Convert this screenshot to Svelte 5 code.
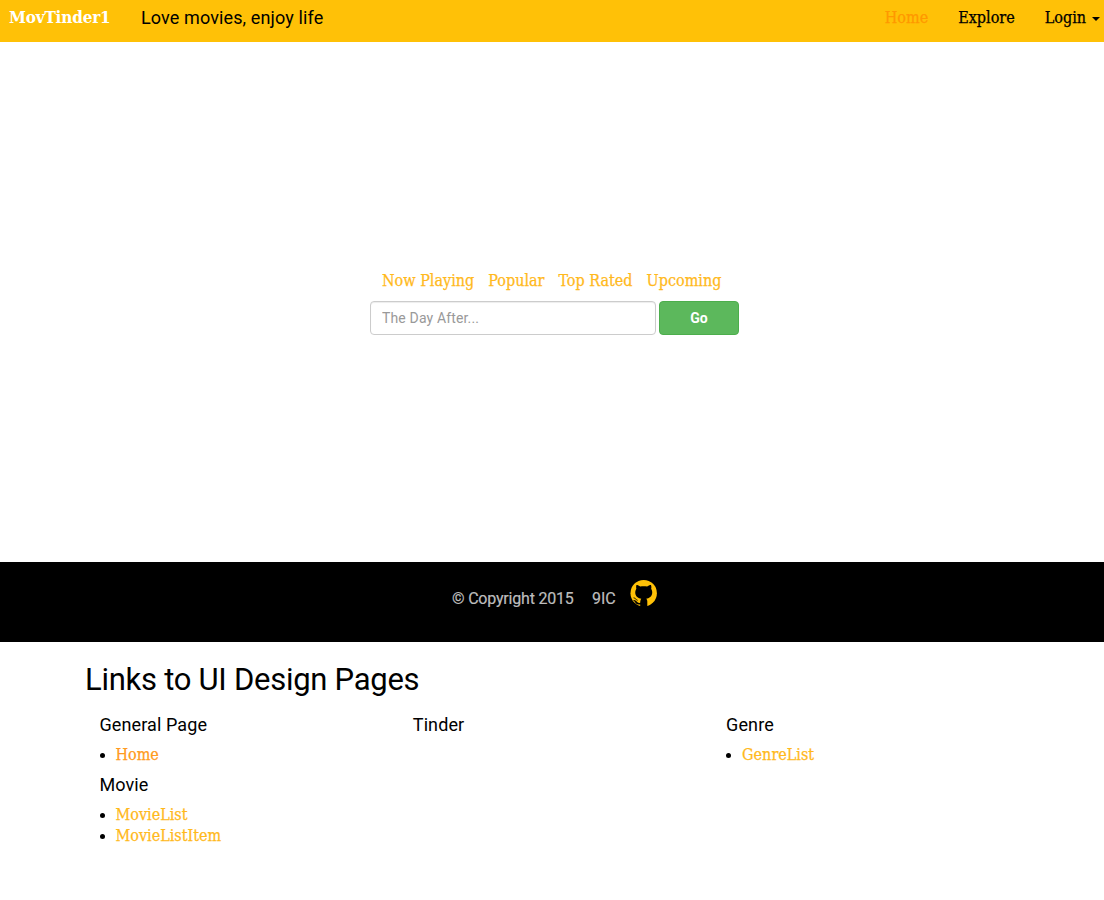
<script>
  const filters = ['Now Playing', 'Popular', 'Top Rated', 'Upcoming'];
  const columns = [
    [
      { title: 'General Page', links: [{ label: 'Home', active: true }] },
      { title: 'Movie', links: [{ label: 'MovieList' }, { label: 'MovieListItem' }] }
    ],
    [{ title: 'Tinder', links: [] }],
    [{ title: 'Genre', links: [{ label: 'GenreList' }] }]
  ];
</script>

<header>
  <a class="brand" href="#top">MovTinder1</a>
  <span class="tagline">Love movies, enjoy life</span>
  <nav>
    <a class="active" href="#home">Home</a>
    <a href="#explore">Explore</a>
    <a href="#login">Login<span class="caret"></span></a>
  </nav>
</header>

<main>
  <div class="filters">
    {#each filters as f}<a href="#filter">{f}</a>{/each}
  </div>
  <form>
    <input type="text" placeholder="The Day After..." />
    <button type="button">Go</button>
  </form>
</main>

<footer>
  <span class="copy">© Copyright 2015</span>
  <span class="org">9IC</span>
  <svg viewBox="0 0 27 27" width="27" height="27" aria-hidden="true">
    <circle cx="13.7" cy="13.2" r="13.2" fill="#ffc107" />
    <path d="M6.400 5.100c1.400 0 2.700.7 3.900 1.400 2.200-.4 4.600-.4 6.800 0 1.200-.7 2.500-1.400 3.900-1.400.5 1.300.5 2.500.2 3.600 2.200 3.400 1.200 9.300-5 10 .8.8 1.100 1.700 1.100 2.900V27h-7.100v-2.500c-3.300.5-4.400-.9-5.200-2.400-.5-.9-1.200-1.300-1.900-1.900 2.200-.5 3.200 1 4 1.900.8.900 2 .9 3.100.6.1-1.700.3-3.200 1.100-4-6.200-.7-7.200-6.600-5-10-.3-1.100-.3-2.300.1-3.600z" />
    <path d="M3.600 17.800c1.900.3 2.400 2 4 2.500" fill="none" stroke="#000" stroke-width=".9" />
  </svg>
</footer>

<section>
  <h2>Links to UI Design Pages</h2>
  <div class="columns">
    {#each columns as groups}
      <div>
        {#each groups as group}
          <h4>{group.title}</h4>
          <ul>
            {#each group.links as link}
              <li><a class:active={link.active} href="#page">{link.label}</a></li>
            {/each}
          </ul>
        {/each}
      </div>
    {/each}
  </div>
</section>

<style>
  :global(body) {
    background: #fff;
    color: #000;
    font: 15px/21px Roboto, sans-serif;
  }
  a {
    font-family: 'Roboto Slab', 'DejaVu Serif Condensed', 'DejaVu Serif', serif;
    font-stretch: condensed;
    font-size: 16px;
    color: #ffb91c;
    text-decoration: none;
    white-space: nowrap;
    -webkit-text-stroke: 0.25px currentColor;
  }
  header {
    display: flex;
    box-sizing: border-box;
    height: 42px;
    padding: 7px 4px 0 9px;
    background: #ffc107;
  }
  .brand {
    width: 132px;
    color: #fff;
    font-size: 17px;
    font-weight: 700;
    letter-spacing: -0.2px;
    -webkit-text-stroke: 0;
  }
  .tagline {
    font-size: 18px;
    letter-spacing: 0.12px;
  }
  nav {
    display: flex;
    gap: 30px;
    margin-left: auto;
  }
  nav a {
    color: #000;
  }
  nav .active {
    color: #ff9800;
  }
  .caret {
    display: inline-block;
    margin-left: 6px;
    vertical-align: middle;
    border: 4px solid transparent;
    border-top-color: #000;
    border-bottom: 0;
  }
  main {
    box-sizing: border-box;
    height: 520px;
    padding: 228px 0 0 370px;
  }
  .filters {
    display: flex;
    gap: 14px;
    padding-left: 12px;
  }
  form {
    display: flex;
    gap: 3px;
    margin-top: 10px;
  }
  input,
  button {
    box-sizing: border-box;
    height: 34px;
    margin: 0;
    border-radius: 4px;
    font: 14px Roboto, sans-serif;
  }
  input {
    width: 286px;
    padding: 0 11px;
    border: 1px solid #ccc;
    box-shadow: inset 0 1px 1px rgba(0, 0, 0, 0.075);
    letter-spacing: 0.15px;
  }
  input::placeholder {
    color: #999;
  }
  button {
    width: 80px;
    border: 1px solid #4cae4c;
    background: #5cb85c;
    color: #fff;
    font-weight: 700;
  }
  footer {
    display: flex;
    box-sizing: border-box;
    height: 80px;
    padding: 18px 0 0 452px;
    background: #000;
    color: #bdbdbd;
    font-size: 16px;
  }
  footer span {
    padding-top: 8px;
    white-space: nowrap;
    -webkit-text-stroke: 0.2px currentColor;
  }
  .copy {
    width: 140px;
    letter-spacing: -0.2px;
  }
  .org {
    width: 38px;
  }
  section {
    padding: 21px 0 0 85px;
  }
  h2 {
    margin: 0;
    font-size: 31px;
    font-weight: 400;
    line-height: 34px;
    letter-spacing: -0.27px;
  }
  .columns {
    display: grid;
    grid-template-columns: repeat(3, 313.3px);
    padding: 18px 0 0 14.5px;
  }
  h4 {
    margin: 0 0 9px;
    font-size: 18px;
    font-weight: 400;
    line-height: 20px;
    letter-spacing: 0.1px;
  }
  ul {
    margin: 0 0 10px;
    padding-left: 16px;
  }
  li {
    height: 21px;
  }
  li .active {
    color: #ff9b20;
  }
</style>
